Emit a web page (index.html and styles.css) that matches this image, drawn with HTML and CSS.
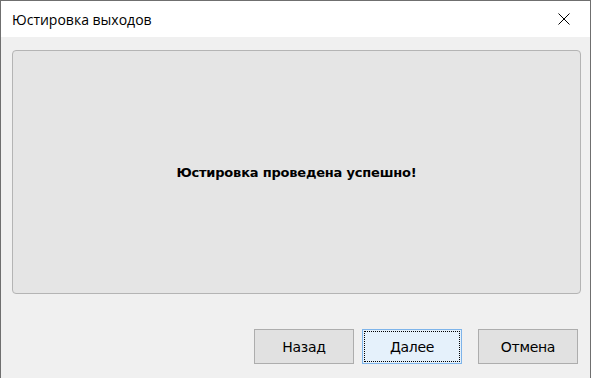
FILE: index.html
```html
<!DOCTYPE html>
<html>
<head>
<meta charset="utf-8">
<link rel="stylesheet" href="styles.css">
</head>
<body>
<div class="window">
  <div class="titlebar">
    <span class="title">Юстировка выходов</span>
    <button class="close" aria-label="Закрыть">
      <svg width="12" height="12" viewBox="0 0 12 12"><path d="M0.5 0.5 L11.5 11.5 M11.5 0.5 L0.5 11.5" stroke="#000" stroke-width="1" fill="none"/></svg>
    </button>
  </div>
  <div class="content">
    <div class="panel">
      <p class="message">Юстировка проведена успешно!</p>
    </div>
    <div class="buttons">
      <button class="btn">Назад</button>
      <button class="btn default">Далее</button>
      <button class="btn cancel">Отмена</button>
    </div>
  </div>
</div>
</body>
</html>
```
FILE: styles.css
```css
html, body {
  margin: 0;
  padding: 0;
  width: 591px;
  height: 378px;
  overflow: hidden;
}
.window {
  box-sizing: border-box;
  width: 591px;
  height: 378px;
  border: 1px solid #6f6f6f;
  border-bottom: none;
  display: flex;
  flex-direction: column;
  font-family: "Noto Sans", "DejaVu Sans", sans-serif;
  background: #f0f0f0;
}
.titlebar {
  height: 36px;
  background: #ffffff;
  display: flex;
  align-items: center;
  justify-content: space-between;
  padding-left: 11px;
  flex: none;
}
.title {
  font-family: "Open Sans", "Noto Sans", sans-serif;
  font-size: 14px;
  color: #000;
}
.close {
  width: 46px;
  height: 36px;
  border: none;
  background: transparent;
  display: flex;
  align-items: center;
  justify-content: center;
  padding: 0;
  margin-right: 3px;
}
.content {
  flex: 1;
  display: flex;
  flex-direction: column;
  padding: 13px 9px 0 11px;
}
.panel {
  height: 244px;
  box-sizing: border-box;
  border: 1px solid #b4b4b4;
  border-radius: 4px;
  background: #e5e5e5;
  display: flex;
  align-items: center;
  justify-content: center;
}
.message {
  margin: 0;
  font-family: "DejaVu Sans", sans-serif;
  font-weight: bold;
  font-size: 13px;
  letter-spacing: -0.2px;
  color: #000;
}
.buttons {
  display: flex;
  justify-content: flex-end;
  gap: 8px;
  margin-top: 35px;
  padding-right: 3px;
}
.btn {
  width: 100px;
  height: 35px;
  box-sizing: border-box;
  border: 1px solid #adadad;
  background: #e1e1e1;
  font-family: "DejaVu Sans", sans-serif;
  font-size: 14px;
  color: #000;
  padding: 0;
  letter-spacing: -0.3px;
}
.btn.default {
  border-color: #7eb4ea;
  background: #e5f1fb;
  outline: 1px dotted #000;
  outline-offset: -3px;
}
.btn.cancel {
  margin-left: 8px;
}
```
